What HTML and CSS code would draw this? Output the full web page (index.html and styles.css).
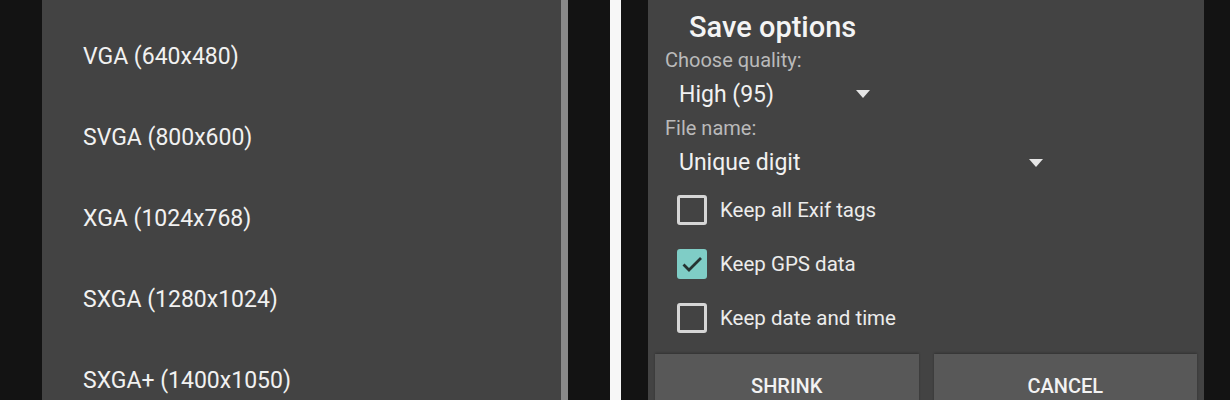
FILE: index.html
```html
<!DOCTYPE html>
<html lang="en">

<head>
    <meta charset="UTF-8">
    <meta name="viewport" content="width=device-width, initial-scale=1.0">
    <title>Resolution and Save options</title>
    <link rel="stylesheet" href="styles.css">
</head>

<body>
    <div class="screens">
        <section class="phone phone-left">
            <ul class="size-list">
                <li>VGA (640x480)</li>
                <li>SVGA (800x600)</li>
                <li>XGA (1024x768)</li>
                <li>SXGA (1280x1024)</li>
                <li>SXGA+ (1400x1050)</li>
            </ul>
            <div class="edge"></div>
        </section>

        <div class="gap"></div>

        <section class="phone phone-right">
            <div class="dialog">
                <h2 class="title">Save options</h2>
                <p class="label">Choose quality:</p>
                <div class="select select-short">
                    <span>High (95)</span>
                    <span class="arrow"></span>
                </div>
                <p class="label">File name:</p>
                <div class="select select-long">
                    <span>Unique digit</span>
                    <span class="arrow"></span>
                </div>
                <ul class="checks">
                    <li><span class="box"></span>Keep all Exif tags</li>
                    <li><span class="box checked">
                        <svg viewBox="0 0 24 24" width="26" height="26">
                            <path d="M3.5 12.5l5.5 5.5L21 6" fill="none" stroke="#263332" stroke-width="2.8" />
                        </svg>
                    </span>Keep GPS data</li>
                    <li><span class="box"></span>Keep date and time</li>
                </ul>
                <div class="buttons">
                    <button>SHRINK</button>
                    <button>CANCEL</button>
                </div>
            </div>
        </section>
    </div>
</body>

</html>
```

FILE: styles.css
```css
body {
    margin: 0;
    padding: 0;
    background-color: #131313;
    font-family: Roboto, "Noto Sans", sans-serif;
    overflow: hidden;
}

.screens {
    display: flex;
    height: 400px;
    width: 1230px;
}

.phone {
    display: flex;
    height: 100%;
}

.phone-left {
    margin-left: 42px;
}

.size-list {
    list-style-type: none;
    margin: 0;
    padding: 16px 0 0 41px;
    width: 478px;
    background-color: #434343;
}

.size-list li {
    height: 81px;
    line-height: 81px;
    color: #f1f1f1;
    font-size: 23px;
}

.edge {
    width: 7px;
    background-color: #8a8a8a;
}

.gap {
    width: 42px;
    margin-right: 27px;
    border-right: 11px solid #f7f7f7;
}

.phone-right {
    width: 556px;
    background-color: #434343;
}

.dialog {
    width: 100%;
    padding-left: 17px;
    box-sizing: border-box;
}

.title {
    margin: 0;
    padding: 4px 0 0 24px;
    height: 46px;
    line-height: 46px;
    font-size: 29px;
    font-weight: 500;
    color: #f4f4f4;
}

.label {
    margin: 0;
    height: 20px;
    line-height: 20px;
    font-size: 20px;
    color: #bababa;
}

.select {
    display: flex;
    align-items: center;
    justify-content: space-between;
    padding: 0 15px 0 14px;
    height: 48px;
    font-size: 23px;
    color: #f1f1f1;
}

.select-short {
    width: 191px;
}

.select-long {
    width: 364px;
    height: 41px;
    padding-top: 4px;
}

.arrow {
    width: 0;
    height: 0;
    border-left: 7px solid transparent;
    border-right: 7px solid transparent;
    border-top: 8px solid #e6e6e6;
}

.checks {
    list-style-type: none;
    margin: 0;
    padding: 0 0 0 12px;
}

.checks li {
    display: flex;
    align-items: center;
    height: 54px;
    font-size: 20.5px;
    color: #ececec;
}

.box {
    display: flex;
    align-items: center;
    justify-content: center;
    flex-shrink: 0;
    width: 24px;
    height: 24px;
    margin-right: 13px;
    border: 3px solid #d6d6d6;
    border-radius: 3px;
}

.box.checked {
    background-color: #7fcdc6;
    border-color: #7fcdc6;
}

.buttons {
    display: flex;
    gap: 15px;
    margin: 9px 0 0 -10px;
    width: 542px;
}

.buttons button {
    flex: 1;
    height: 60px;
    padding: 4px 0 0 0;
    border: none;
    background-color: #585858;
    color: #f2f2f2;
    font-family: Roboto, sans-serif;
    font-size: 20px;
    font-weight: 500;
    box-shadow: 0 -1px 2px rgba(0, 0, 0, 0.25);
}
```
